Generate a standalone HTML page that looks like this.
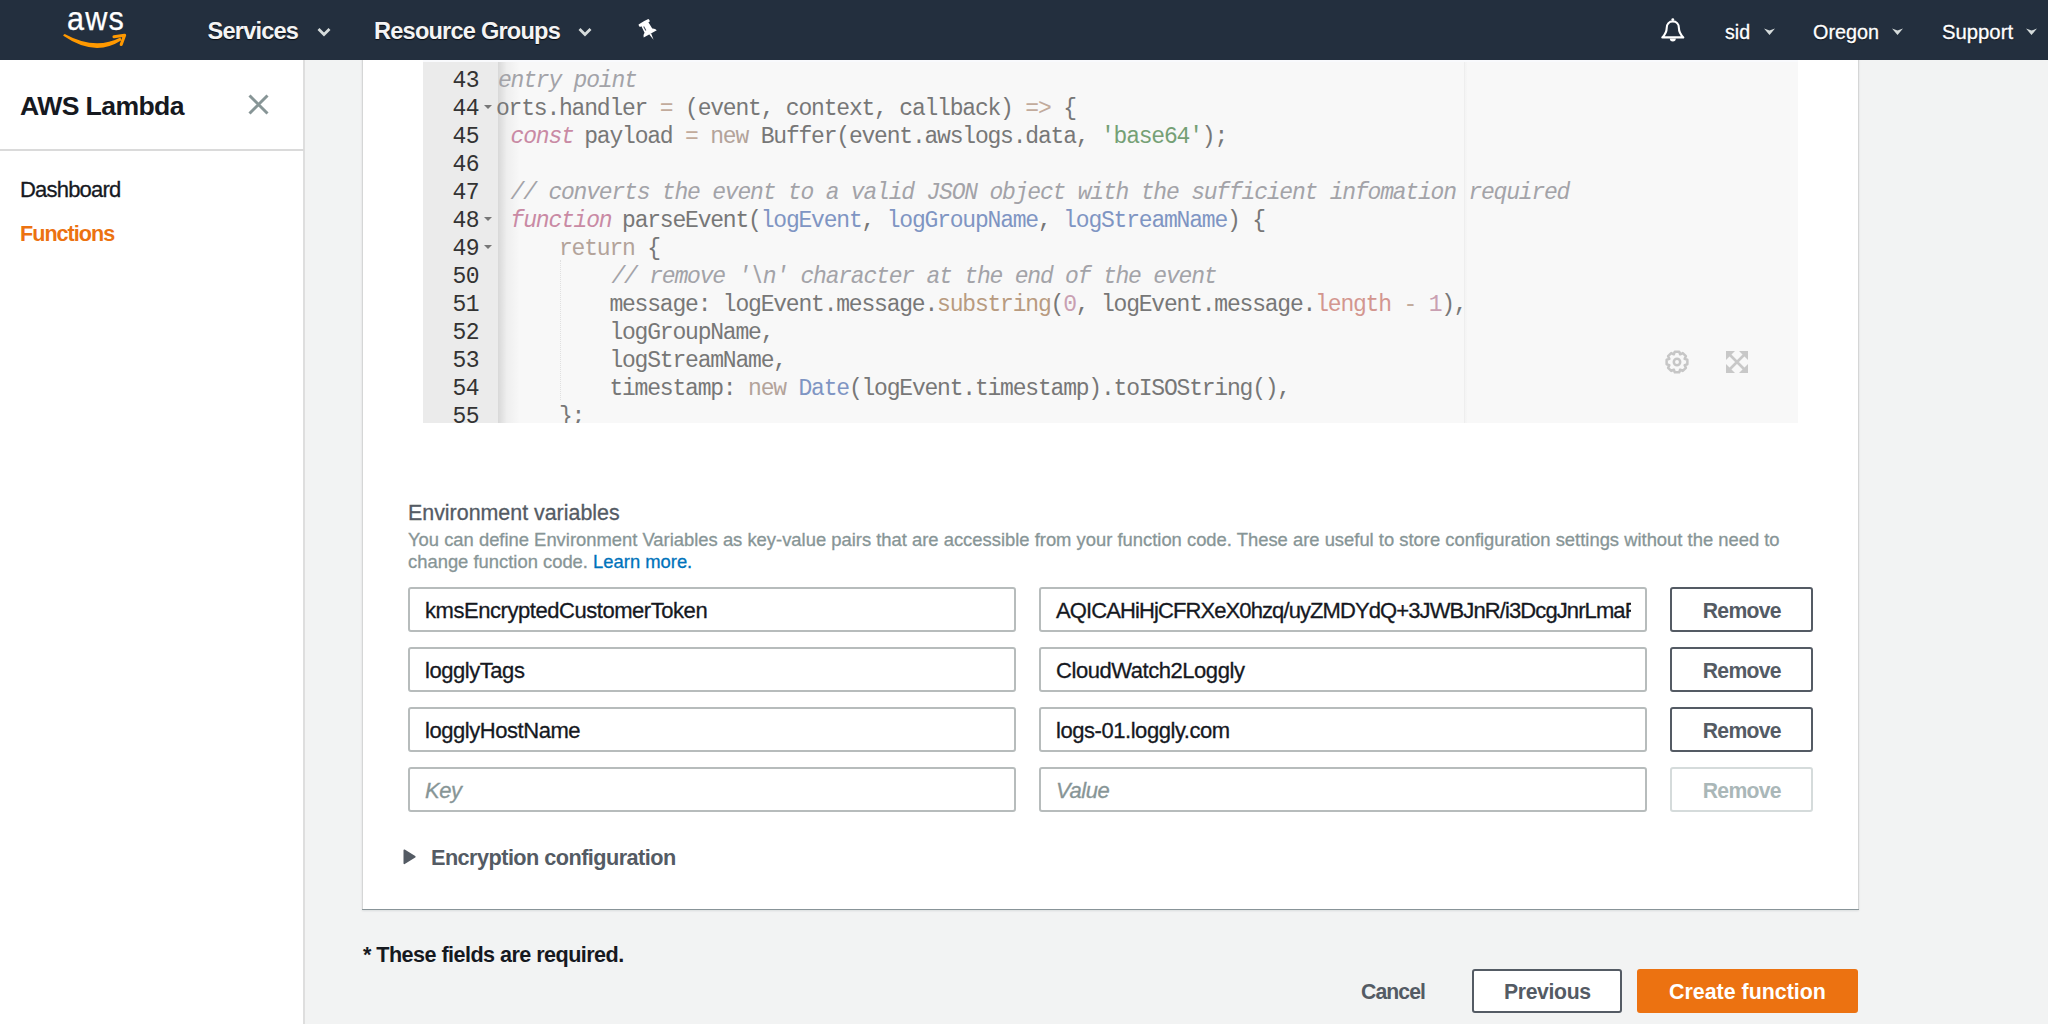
<!DOCTYPE html>
<html><head><meta charset="utf-8">
<style>
*{margin:0;padding:0;box-sizing:border-box}
html,body{width:2048px;height:1024px;overflow:hidden;background:#f2f3f3;font-family:"Liberation Sans",sans-serif;position:relative}
.a{position:absolute;white-space:pre;line-height:1}
#nav{position:absolute;left:0;top:0;width:2048px;height:60px;background:#232f3e}
#side{position:absolute;left:0;top:60px;width:305px;height:964px;background:#fff;border-right:2px solid #dedede}
#card{position:absolute;left:362px;top:40px;width:1497px;height:869px;background:#fff;border:1px solid #d5d6d6;border-bottom:none;box-shadow:0 1px 0 rgba(0,28,36,.38),0 2px 2px rgba(0,28,36,.1)}
#editor{position:absolute;left:423px;top:60px;width:1375px;height:363px;background:#f8f8f8;overflow:hidden}
#gutter{position:absolute;left:0;top:0;width:75px;height:363px;background:#ebebeb}
#shadow{position:absolute;left:75px;top:0;width:22px;height:363px;background:linear-gradient(to right,rgba(0,0,0,.13),rgba(0,0,0,.04) 40%,rgba(0,0,0,0))}
#margin{position:absolute;left:1041px;top:0;width:3px;height:363px;background:linear-gradient(to right,#eeeeee,#eeeeee 33%,#f4f4f4 34%,#f6f6f6)}
#etop{position:absolute;left:0;top:0;width:1375px;height:2px;background:#f9fafd}
.guide{position:absolute;width:1px;border-left:1px dotted #e0e0e0}
.fold{position:absolute;left:61px;width:0;height:0;border-left:4px solid transparent;border-right:4px solid transparent;border-top:4px solid #777}
.ln{position:absolute;left:0;width:56px;text-align:right;font-family:"Liberation Mono",monospace;font-size:23px;letter-spacing:-0.6px;color:#333;line-height:28px}
.code{position:absolute;left:73px;font-family:"Liberation Mono",monospace;font-size:23px;letter-spacing:-1.2px;line-height:28px;color:#777;white-space:pre}
.cm{color:#a3a3a8;font-style:italic;position:relative;left:2px}
.kw{color:#c98aa4;font-style:italic;position:relative;left:2px}
.op{color:#c2ab9c}
.nw{color:#b3a39a}
.st{color:#75a075}
.pa{color:#7f95c3}
.fn{color:#b89b80}
.pr{color:#d3968f}
.nu{color:#c9a0b2}
.inp{position:absolute;height:45px;border:2px solid #b7bcbc;border-radius:3px;background:#fff}
.btn{position:absolute;width:143px;height:45px;border:2px solid #545b64;border-radius:3px;background:#fff;font-weight:bold;color:#545b64}

</style></head><body>
<div id="side"></div>
<div class="a" style="left:20px;top:93.38px;font-size:26.6px;color:#16191f;font-weight:bold;letter-spacing:-0.6px;">AWS Lambda</div>
<svg class="a" style="left:246px;top:93px" width="24" height="24" viewBox="0 0 24 24"><path d="M3.5 2.5L21.5 20.5M21.5 2.5L3.5 20.5" stroke="#879596" stroke-width="3" fill="none"/></svg>
<div class="a" style="left:0;top:149px;width:304px;height:2px;background:#dadada"></div>
<div class="a" style="left:20px;top:178.68px;font-size:22px;color:#16191f;-webkit-text-stroke:0.3px #16191f;letter-spacing:-0.8px;">Dashboard</div>
<div class="a" style="left:20px;top:223.02px;font-size:21.6px;color:#ec7211;font-weight:bold;letter-spacing:-1.0px;">Functions</div>
<div id="card"></div>
<div id="editor"><div id="gutter"></div><div id="shadow"></div><div id="margin"></div><div id="etop"></div><div class="ln" style="top:6.6px">43</div><div class="code" style="top:6.6px"><span class="cm">entry point</span></div><div class="ln" style="top:34.6px">44</div><div class="fold" style="top:45.2px"></div><div class="code" style="top:34.6px">orts.handler <span class="op">=</span> (event, context, callback) <span class="op">=&gt;</span> {</div><div class="ln" style="top:62.6px">45</div><div class="code" style="top:62.6px"> <span class="kw">const</span> payload <span class="op">=</span> <span class="nw">new</span> Buffer(event.awslogs.data, <span class="st">'base64'</span>);</div><div class="ln" style="top:90.6px">46</div><div class="code" style="top:90.6px"></div><div class="ln" style="top:118.6px">47</div><div class="code" style="top:118.6px"> <span class="cm">// converts the event to a valid JSON object with the sufficient infomation required</span></div><div class="ln" style="top:146.6px">48</div><div class="fold" style="top:157.2px"></div><div class="code" style="top:146.6px"> <span class="kw">function</span> parseEvent(<span class="pa">logEvent</span>, <span class="pa">logGroupName</span>, <span class="pa">logStreamName</span>) {</div><div class="ln" style="top:174.6px">49</div><div class="fold" style="top:185.2px"></div><div class="code" style="top:174.6px">     <span class="nw">return</span> {</div><div class="ln" style="top:202.6px">50</div><div class="code" style="top:202.6px">         <span class="cm">// remove '\n' character at the end of the event</span></div><div class="ln" style="top:230.6px">51</div><div class="code" style="top:230.6px">         message: logEvent.message.<span class="fn">substring</span>(<span class="nu">0</span>, logEvent.message.<span class="pr">length</span> <span class="op">-</span> <span class="nu">1</span>),</div><div class="ln" style="top:258.6px">52</div><div class="code" style="top:258.6px">         logGroupName,</div><div class="ln" style="top:286.6px">53</div><div class="code" style="top:286.6px">         logStreamName,</div><div class="ln" style="top:314.6px">54</div><div class="code" style="top:314.6px">         timestamp: <span class="nw">new</span> <span class="pa">Date</span>(logEvent.timestamp).toISOString(),</div><div class="ln" style="top:342.6px">55</div><div class="code" style="top:342.6px">     };</div><div class="guide" style="left:137px;top:200px;height:140px"></div><svg class="a" style="left:1241px;top:288.5px" width="26" height="26" viewBox="0 0 26 26"><path d="M20.70,9.89 L23.37,10.80 L23.37,15.20 L20.70,16.11 L20.64,16.24 L21.89,18.77 L18.77,21.89 L16.24,20.64 L16.11,20.70 L15.20,23.37 L10.80,23.37 L9.89,20.70 L9.76,20.64 L7.23,21.89 L4.11,18.77 L5.36,16.24 L5.30,16.11 L2.63,15.20 L2.63,10.80 L5.30,9.89 L5.36,9.76 L4.11,7.23 L7.23,4.11 L9.76,5.36 L9.89,5.30 L10.80,2.63 L15.20,2.63 L16.11,5.30 L16.24,5.36 L18.77,4.11 L21.89,7.23 L20.64,9.76Z" fill="none" stroke="#c6c6c6" stroke-width="2.5" stroke-linejoin="round"/><circle cx="13" cy="13" r="3.2" fill="none" stroke="#c6c6c6" stroke-width="2.5"/></svg><svg class="a" style="left:1303px;top:291px" width="22" height="22" viewBox="0 0 22 22"><g fill="#c8c8c8"><path d="M0 0h8l-2.5 2.5L11 8l2.5-2.5L19 11l-2.5 2.5L22 22h-8l2.5-2.5L11 14l-5.5 5.5L8 22H0v-8l2.5 2.5L8 11 2.5 5.5 0 8z" opacity="0"/></g>
<g stroke="#c8c8c8" stroke-width="2.6" fill="none"><path d="M3 3L19 19M19 3L3 19"/></g><g fill="#c8c8c8"><path d="M0 0h9L0 9z"/><path d="M22 0h-9l9 9z"/><path d="M0 22h9L0 13z"/><path d="M22 22h-9l9-9z"/></g></svg></div>
<div class="a" style="left:408px;top:503.38px;font-size:21.4px;color:#545b64;-webkit-text-stroke:0.3px #545b64;">Environment variables</div>
<div class="a" style="left:408px;top:530.52px;font-size:18.4px;color:#879596;-webkit-text-stroke:0.3px #879596;">You can define Environment Variables as key-value pairs that are accessible from your function code. These are useful to store configuration settings without the need to</div>
<div class="a" style="left:408px;top:552.82px;font-size:18.4px;color:#879596;-webkit-text-stroke:0.3px #879596;">change function code. <span style="color:#0073bb;-webkit-text-stroke-color:#0073bb">Learn more.</span></div>
<div class="inp" style="left:408px;top:587px;width:608px"></div><div class="inp" style="left:1039px;top:587px;width:608px;overflow:hidden"></div><div class="a" style="left:425px;top:600.08px;font-size:22px;color:#16191f;-webkit-text-stroke:0.3px #16191f;letter-spacing:-0.45px;">kmsEncryptedCustomerToken</div>
<div class="a" style="left:1041px;top:589px;width:590px;height:40px;overflow:hidden"><div class="a" style="left:15px;top:11.08px;font-size:22px;color:#16191f;-webkit-text-stroke:0.3px #16191f;letter-spacing:-0.9px;">AQICAHiHjCFRXeX0hzq/uyZMDYdQ+3JWBJnR/i3DcgJnrLmaF</div>
</div><div class="btn" style="left:1670px;top:587px"><span class="a" style="left:0;width:139px;text-align:center;top:11.05px;font-size:21.2px;letter-spacing:-0.7px;text-indent:0.7px">Remove</span></div><div class="inp" style="left:408px;top:647px;width:608px"></div><div class="inp" style="left:1039px;top:647px;width:608px;overflow:hidden"></div><div class="a" style="left:425px;top:660.08px;font-size:22px;color:#16191f;-webkit-text-stroke:0.3px #16191f;letter-spacing:-0.45px;">logglyTags</div>
<div class="a" style="left:1041px;top:649px;width:590px;height:40px;overflow:hidden"><div class="a" style="left:15px;top:11.08px;font-size:22px;color:#16191f;-webkit-text-stroke:0.3px #16191f;letter-spacing:-0.45px;">CloudWatch2Loggly</div>
</div><div class="btn" style="left:1670px;top:647px"><span class="a" style="left:0;width:139px;text-align:center;top:11.05px;font-size:21.2px;letter-spacing:-0.7px;text-indent:0.7px">Remove</span></div><div class="inp" style="left:408px;top:707px;width:608px"></div><div class="inp" style="left:1039px;top:707px;width:608px;overflow:hidden"></div><div class="a" style="left:425px;top:720.08px;font-size:22px;color:#16191f;-webkit-text-stroke:0.3px #16191f;letter-spacing:-0.45px;">logglyHostName</div>
<div class="a" style="left:1041px;top:709px;width:590px;height:40px;overflow:hidden"><div class="a" style="left:15px;top:11.08px;font-size:22px;color:#16191f;-webkit-text-stroke:0.3px #16191f;letter-spacing:-0.45px;">logs-01.loggly.com</div>
</div><div class="btn" style="left:1670px;top:707px"><span class="a" style="left:0;width:139px;text-align:center;top:11.05px;font-size:21.2px;letter-spacing:-0.7px;text-indent:0.7px">Remove</span></div><div class="inp" style="left:408px;top:767px;width:608px"></div><div class="inp" style="left:1039px;top:767px;width:608px;overflow:hidden"></div><div class="a" style="left:425px;top:780.08px;font-size:22px;color:#879596;-webkit-text-stroke:0.3px #879596;font-style:italic;letter-spacing:-0.45px;">Key</div>
<div class="a" style="left:1041px;top:769px;width:590px;height:40px;overflow:hidden"><div class="a" style="left:15px;top:11.08px;font-size:22px;color:#879596;-webkit-text-stroke:0.3px #879596;font-style:italic;letter-spacing:-0.45px;">Value</div>
</div><div class="btn" style="left:1670px;top:767px;border-color:#d5dbdb;color:#aab7b8"><span class="a" style="left:0;width:139px;text-align:center;top:11.05px;font-size:21.2px;letter-spacing:-0.7px;text-indent:0.7px">Remove</span></div><svg class="a" style="left:403px;top:848.6px" width="13" height="16" viewBox="0 0 13 16"><path d="M1.3 1.3L11.8 7.8L1.3 14.3z" fill="#545b64" stroke="#545b64" stroke-width="1.6" stroke-linejoin="round"/></svg>
<div class="a" style="left:431px;top:847.13px;font-size:21.7px;color:#545b64;font-weight:bold;letter-spacing:-0.55px;">Encryption configuration</div>
<div class="a" style="left:363px;top:944.42px;font-size:21.6px;color:#16191f;font-weight:bold;letter-spacing:-0.55px;">* These fields are required.</div>
<div class="a" style="left:1361px;top:981.25px;font-size:21.2px;color:#545b64;font-weight:bold;letter-spacing:-0.9px;">Cancel</div>
<div class="a" style="left:1472px;top:969px;width:150px;height:44px;border:2px solid #545b64;border-radius:3px;background:#fff"></div>
<div class="a" style="left:1504px;top:981.25px;font-size:21.2px;color:#545b64;font-weight:bold;letter-spacing:-0.35px;">Previous</div>
<div class="a" style="left:1637px;top:969px;width:221px;height:44px;border-radius:3px;background:#ec7211"></div>
<div class="a" style="left:1669px;top:981.78px;font-size:21.4px;color:#ffffff;font-weight:bold;">Create function</div>
<div id="nav"></div>
<div class="a" style="left:66.5px;top:0.92px;font-size:34px;color:#ffffff;-webkit-text-stroke:0.3px #ffffff;transform:scaleX(0.9);transform-origin:0 0;letter-spacing:1.3px;-webkit-text-stroke:0.25px #fff;">aws</div>
<svg class="a" style="left:55px;top:5px" width="80" height="50" viewBox="55 5 80 50"><path d="M63.3,35.8 Q95,57.5 121.5,40.3 L120.5,37.4 Q95,50.5 64.7,33.9 Q63,34.5 63.3,35.8Z" fill="#ff9900"/><path d="M114,36.8 L124.6,35.3 L121.2,44.5" stroke="#ff9900" stroke-width="3.1" fill="none" stroke-linecap="round" stroke-linejoin="round"/></svg>
<div class="a" style="left:207.5px;top:19.62px;font-size:23.6px;color:#f4f4f4;font-weight:bold;letter-spacing:-0.8px;text-shadow:0 1px 1px rgba(0,0,0,.8);">Services</div>
<svg class="a" style="left:317px;top:27px" width="14" height="10" viewBox="0 0 14 10"><path d="M1.5 2L7 7.5L12.5 2" stroke="#d5dbdb" stroke-width="2.8" fill="none"/></svg>
<div class="a" style="left:374px;top:19.62px;font-size:23.6px;color:#f4f4f4;font-weight:bold;letter-spacing:-0.8px;text-shadow:0 1px 1px rgba(0,0,0,.8);">Resource Groups</div>
<svg class="a" style="left:578px;top:27px" width="14" height="10" viewBox="0 0 14 10"><path d="M1.5 2L7 7.5L12.5 2" stroke="#d5dbdb" stroke-width="2.8" fill="none"/></svg>
<svg class="a" style="left:630px;top:12px" width="35" height="35" viewBox="630 12 35 35"><g transform="translate(648.4 30.6) rotate(-29)"><path d="M-5.6,-10.2 Q0,-10.8 5.6,-10.2 Q6.4,-8.7 5.6,-7.2 H4 L4.4,0 Q7,1.2 7.5,3.8 H-7.5 Q-7,1.2 -4.4,0 L-4,-7.2 H-5.6 Q-6.4,-8.7 -5.6,-10.2Z" fill="#fff"/><path d="M-1.1,3.5 L0,10.6 L1.1,3.5Z" fill="#fff"/><path d="M-2.2,-5.8 V-1.2" stroke="#3a4452" stroke-width="1"/></g></svg>
<svg class="a" style="left:1655px;top:12px" width="35" height="35" viewBox="1655 12 35 35"><path d="M1662.3,37.4 C1665.6,34 1666.7,32 1666.7,28 C1666.7,24 1669.3,21.4 1672.8,21.4 C1676.3,21.4 1678.9,24 1678.9,28 C1678.9,32 1680,34 1683.3,37.4 Z" fill="none" stroke="#fff" stroke-width="2.1" stroke-linejoin="round"/><circle cx="1672.8" cy="19.6" r="1.4" fill="#fff"/><path d="M1669.8,38.4 A3,3 0 0 0 1675.8,38.4 Z" fill="#fff"/></svg>
<div class="a" style="left:1725px;top:22.91px;font-size:19.6px;color:#ffffff;-webkit-text-stroke:0.3px #ffffff;text-shadow:0 1px 1px rgba(0,0,0,.7);">sid</div>
<svg class="a" style="left:1764px;top:28px" width="11" height="7" viewBox="0 0 11 7"><path d="M0 0.5L5.5 2.6L11 0.5L5.5 7z" fill="#d5dbdb"/></svg>
<div class="a" style="left:1813px;top:22.74px;font-size:19.8px;color:#ffffff;-webkit-text-stroke:0.3px #ffffff;text-shadow:0 1px 1px rgba(0,0,0,.7);">Oregon</div>
<svg class="a" style="left:1892px;top:28px" width="11" height="7" viewBox="0 0 11 7"><path d="M0 0.5L5.5 2.6L11 0.5L5.5 7z" fill="#d5dbdb"/></svg>
<div class="a" style="left:1942px;top:22.32px;font-size:20.3px;color:#ffffff;-webkit-text-stroke:0.3px #ffffff;text-shadow:0 1px 1px rgba(0,0,0,.7);">Support</div>
<svg class="a" style="left:2026px;top:28px" width="11" height="7" viewBox="0 0 11 7"><path d="M0 0.5L5.5 2.6L11 0.5L5.5 7z" fill="#d5dbdb"/></svg>
</body></html>
